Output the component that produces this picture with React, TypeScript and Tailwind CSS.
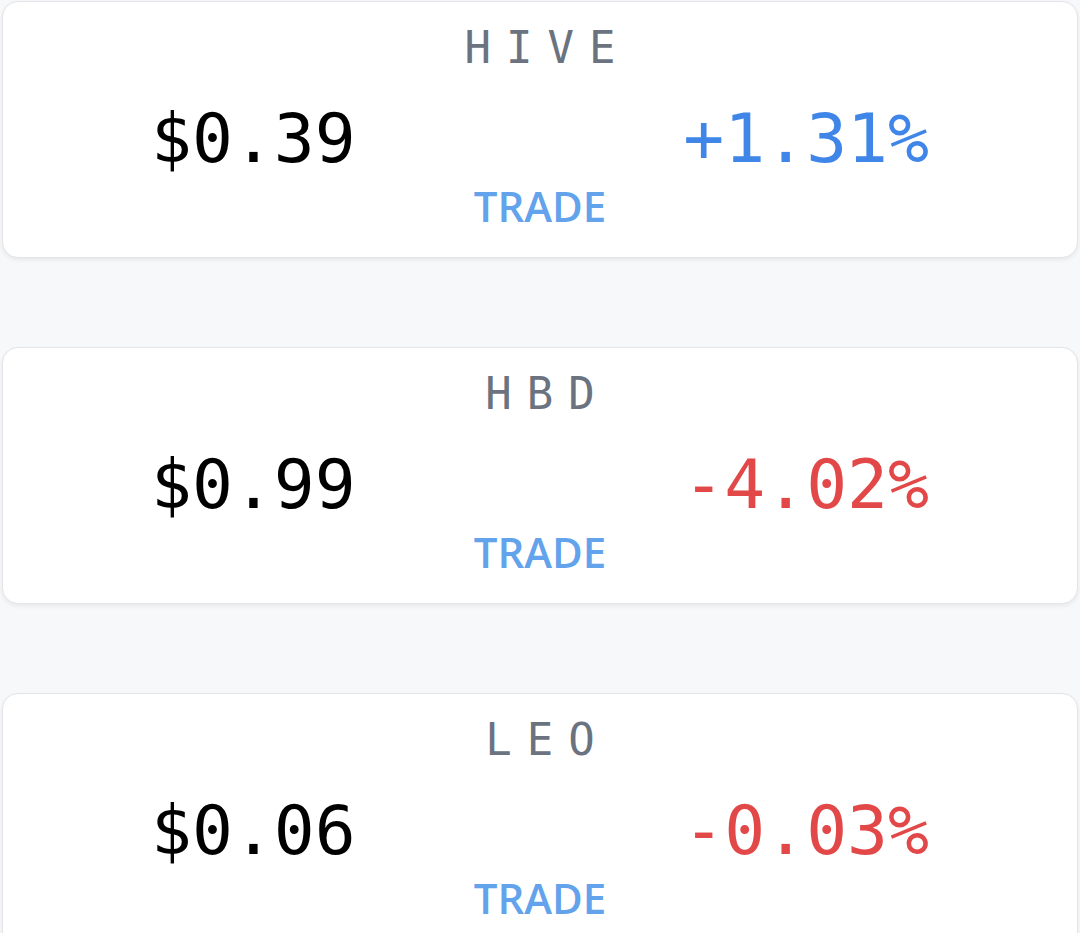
import React from "react";

type Coin = {
  symbol: string;
  price: string;
  change: string;
  up: boolean;
};

const coins: Coin[] = [
  { symbol: "HIVE", price: "$0.39", change: "+1.31%", up: true },
  { symbol: "HBD", price: "$0.99", change: "-4.02%", up: false },
  { symbol: "LEO", price: "$0.06", change: "-0.03%", up: false },
];

const CoinCard = ({ coin }: { coin: Coin }) => {
  return (
    <div className="flex flex-col items-center rounded-[16px] border border-[#e4e5e8] bg-white pt-[24px] pb-[30px] shadow-[0_2px_4px_rgba(0,0,0,0.07)]">
      {/* Symbol */}
      <div className="pl-[15px] font-['DejaVu_Sans_Mono',monospace] text-[44px] leading-none tracking-[15px] text-[#6b7280]">
        {coin.symbol}
      </div>

      {/* Price + change */}
      <div className="mt-[35px] flex w-full items-center justify-between px-[148px] font-['DejaVu_Sans_Mono',monospace] text-[68px] leading-none">
        <span className="text-black">{coin.price}</span>
        <span className={coin.up ? "text-[#3f86e8]" : "text-[#e34848]"}>{coin.change}</span>
      </div>

      {/* Trade link */}
      <div className="mt-[12px] font-['Open_Sans',sans-serif] text-[42px] font-semibold leading-none text-[#63a3ec]">
        TRADE
      </div>
    </div>
  );
};

export default function App() {
  return (
    <div className="min-h-screen bg-[#f7f8fa] px-[2px] pt-px">
      <div className="flex flex-col gap-[89px]">
        {coins.map((c) => (
          <CoinCard key={c.symbol} coin={c} />
        ))}
      </div>
    </div>
  );
}
